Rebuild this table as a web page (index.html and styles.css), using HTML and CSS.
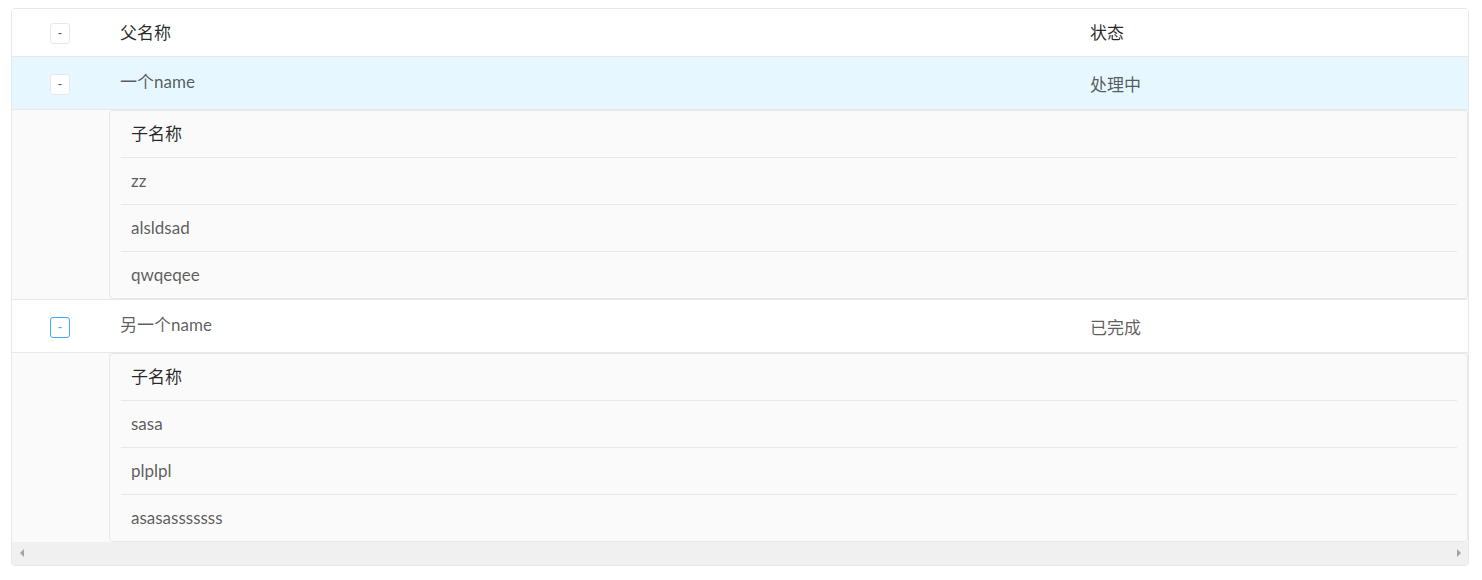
FILE: index.html
```html
<!DOCTYPE html>
<html lang="zh">
<head>
<meta charset="utf-8">
<title>表格</title>
<link rel="stylesheet" href="styles.css">
</head>
<body>
<div class="table-wrap">
  <table class="main">
    <colgroup>
      <col class="col-exp">
      <col>
      <col class="col-status">
    </colgroup>
    <thead>
      <tr>
        <th class="mc head exp"><span class="exp-btn">-</span></th>
        <th class="mc head">父名称</th>
        <th class="mc head">状态</th>
      </tr>
    </thead>
    <tbody>
      <tr>
        <td class="mc body active exp"><span class="exp-btn">-</span></td>
        <td class="mc body active name">一个name</td>
        <td class="mc body active status">处理中</td>
      </tr>
      <tr>
        <td class="mc blank"></td>
        <td class="mc holder" colspan="2">
          <div class="inner">
            <table class="sub">
              <thead><tr><th class="sc sh">子名称</th></tr></thead>
              <tbody>
                <tr><td class="sc sb">zz</td></tr>
                <tr><td class="sc sb">alsldsad</td></tr>
                <tr><td class="sc sb last">qwqeqee</td></tr>
              </tbody>
            </table>
          </div>
        </td>
      </tr>
      <tr>
        <td class="mc body exp"><span class="exp-btn focused">-</span></td>
        <td class="mc body name">另一个name</td>
        <td class="mc body status">已完成</td>
      </tr>
      <tr>
        <td class="mc blank final"></td>
        <td class="mc holder final" colspan="2">
          <div class="inner">
            <table class="sub">
              <thead><tr><th class="sc sh">子名称</th></tr></thead>
              <tbody>
                <tr><td class="sc sb">sasa</td></tr>
                <tr><td class="sc sb">plplpl</td></tr>
                <tr><td class="sc sb last">asasasssssss</td></tr>
              </tbody>
            </table>
          </div>
        </td>
      </tr>
    </tbody>
  </table>
  <div class="scrollbar">
    <span class="arrow arrow-left"></span>
    <span class="arrow arrow-right"></span>
  </div>
</div>
</body>
</html>
```

FILE: styles.css
```css
html, body {
  margin: 0;
  padding: 0;
  background: #ffffff;
}
body {
  padding: 8px 13px 0 11px;
  font-family: "Lato", "Noto Sans CJK SC", sans-serif;
  font-size: 17px;
  color: rgba(0, 0, 0, 0.65);
}
.table-wrap {
  border: 1px solid #e8e8e8;
  border-radius: 4px;
  overflow: hidden;
  width: 1456px;
}
table {
  border-collapse: collapse;
  border-spacing: 0;
}
.main {
  width: 100%;
  table-layout: fixed;
}
.col-exp { width: 96px; }
.col-status { width: 390px; }

.mc {
  text-align: left;
  vertical-align: middle;
  padding: 0 12px;
  line-height: 21px;
}
.mc.head {
  padding-top: 12px;
  padding-bottom: 12px;
  font-weight: 400;
  color: rgba(0, 0, 0, 0.85);
  background: #ffffff;
  border-bottom: 1px solid #e8e8e8;
}
.mc.exp {
  padding-left: 0;
  padding-right: 0;
  text-align: center;
}
.mc.body {
  border-bottom: 1px solid #e8e8e8;
  background: #ffffff;
}
.mc.body.name {
  padding-top: 14px;
  padding-bottom: 17px;
}
.mc.body.status {
  padding-top: 3px;
}
.mc.body.active {
  background: #e6f7ff;
}
.exp-btn {
  display: inline-flex;
  align-items: center;
  justify-content: center;
  box-sizing: border-box;
  width: 20px;
  height: 21px;
  border: 1px solid #e8e8e8;
  border-radius: 3px;
  background: #ffffff;
  font-size: 13px;
  line-height: 1;
  color: #595959;
  vertical-align: middle;
}
.exp-btn.focused {
  border-color: #40a9ff;
  color: #40a9ff;
}
.mc.blank,
.mc.holder {
  background: #fafafa;
  border-bottom: 1px solid #e8e8e8;
  padding: 0;
}
.mc.holder {
  padding-left: 1px;
  vertical-align: top;
}
.mc.final {
  border-bottom: none;
}
.inner {
  border: 1px solid #e8e8e8;
  border-radius: 4px;
  background: #fafafa;
  padding: 0 10px 0 11px;
}
.sub {
  width: 100%;
}
.sc {
  text-align: left;
  vertical-align: middle;
  padding: 12px 10px;
  line-height: 22px;
  border-bottom: 1px solid #e8e8e8;
  background: #fafafa;
}
.sc.sh {
  font-weight: 400;
  color: rgba(0, 0, 0, 0.85);
}
.sc.last {
  border-bottom: none;
}
.scrollbar {
  position: relative;
  height: 23px;
  background: #f0f0f0;
}
.arrow {
  position: absolute;
  top: 7px;
  width: 0;
  height: 0;
  border-top: 4px solid transparent;
  border-bottom: 4px solid transparent;
}
.arrow-left {
  left: 8px;
  border-right: 4px solid #a3a3a3;
}
.arrow-right {
  right: 7px;
  border-left: 4px solid #a3a3a3;
}
```
